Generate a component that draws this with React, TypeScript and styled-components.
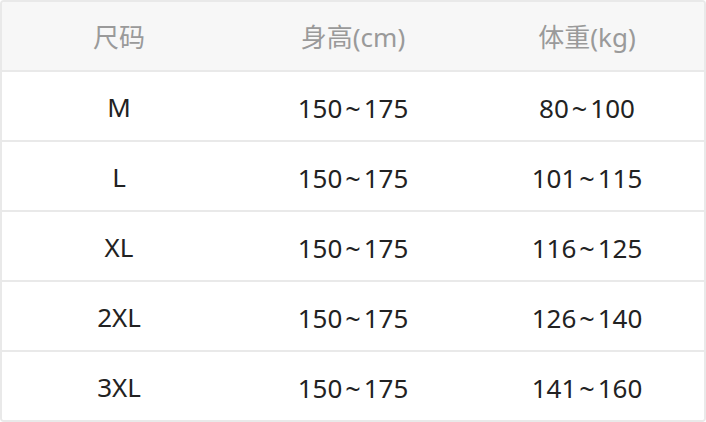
import styled, { createGlobalStyle } from 'styled-components';

const GlobalStyle = createGlobalStyle`
  html, body {
    margin: 0;
    padding: 0;
    background: #ffffff;
  }
`;

const Table = styled.div`
  width: 706px;
  height: 422px;
  box-sizing: border-box;
  border: 2px solid #e9e9e9;
  border-radius: 4px;
  overflow: hidden;
  display: flex;
  flex-direction: column;
  font-family: "Noto Sans", "Noto Sans CJK SC", sans-serif;
`;

const Row = styled.div<{ isHead?: boolean }>`
  height: 68px;
  display: grid;
  grid-template-columns: repeat(3, 1fr);
  align-items: center;
  background: ${({ isHead }) => (isHead ? '#f7f7f7' : '#ffffff')};
  color: ${({ isHead }) => (isHead ? '#9a9a9a' : '#222222')};
  & + & {
    border-top: 2px solid #e9e9e9;
  }
`;

const Cell = styled.div`
  text-align: center;
  font-size: 26px;
  line-height: 1;
  padding-top: 2px;
`;

const Tilde = styled.span`
  display: inline-block;
  margin: 0 3px;
  font-size: 27px;
  transform: translateY(1px);
`;

const rows = [
  ['M', '150~175', '80~100'],
  ['L', '150~175', '101~115'],
  ['XL', '150~175', '116~125'],
  ['2XL', '150~175', '126~140'],
  ['3XL', '150~175', '141~160'],
];

const renderValue = (value: string) => {
  const parts = value.split('~');
  if (parts.length < 2) return value;
  return (
    <>
      {parts[0]}
      <Tilde>~</Tilde>
      {parts[1]}
    </>
  );
};

const App = () => (
  <>
    <GlobalStyle />
    <Table>
      <Row isHead>
        <Cell>尺码</Cell>
        <Cell>身高(cm)</Cell>
        <Cell>体重(kg)</Cell>
      </Row>
      {rows.map((row) => (
        <Row key={row[0]}>
          {row.map((value, i) => (
            <Cell key={i}>{renderValue(value)}</Cell>
          ))}
        </Row>
      ))}
    </Table>
  </>
);

export default App;
